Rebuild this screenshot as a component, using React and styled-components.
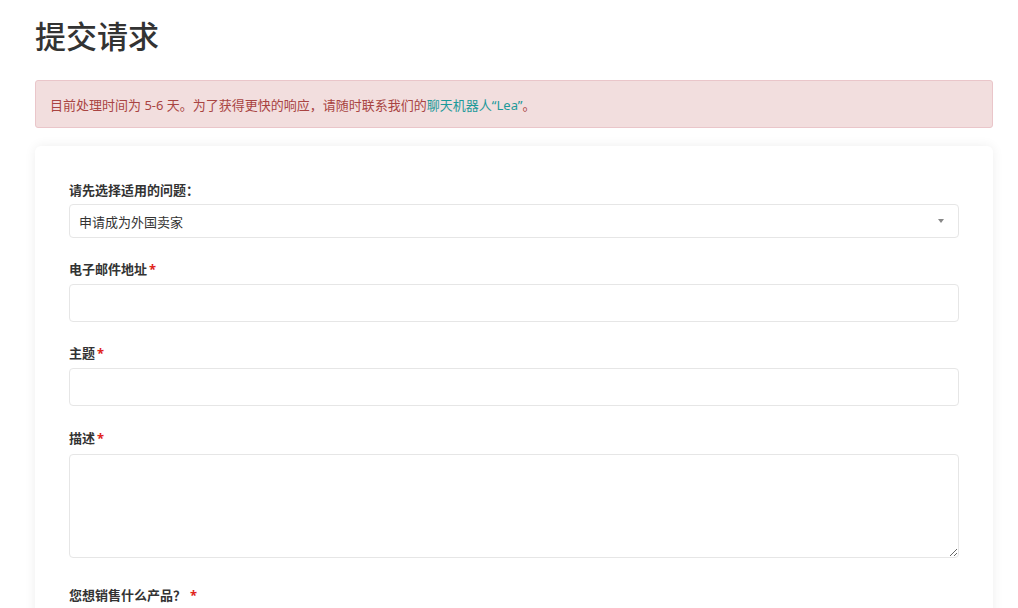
import React from "react";
import styled, { createGlobalStyle } from "styled-components";

const GlobalStyle = createGlobalStyle`
  body {
    margin: 0;
    background: #ffffff;
    font-family: "Noto Sans", "Noto Sans CJK SC", sans-serif;
    color: #333333;
  }
`;

const Page = styled.div`
  padding: 0 25px 0 35px;
  overflow: hidden;
  height: 608px;
  box-sizing: border-box;
`;

const Title = styled.h1`
  margin: 0;
  padding-top: 14px;
  font-family: "Noto Sans CJK SC", sans-serif;
  font-size: 31px;
  font-weight: 500;
  line-height: 42px;
  color: #333333;
`;

const Alert = styled.div`
  margin-top: 24px;
  height: 48px;
  box-sizing: border-box;
  display: flex;
  align-items: center;
  padding: 0 14px;
  background: #f2dede;
  border: 1px solid #eac6ca;
  border-radius: 3px;
  color: #a94442;
  font-size: 13px;
`;

const Link = styled.a`
  color: #1e9a9a;
  text-decoration: none;
`;

const Card = styled.div`
  margin-top: 18px;
  background: #ffffff;
  border-radius: 6px;
  box-shadow: 0 0 12px rgba(0, 0, 0, 0.07);
  padding: 35px 34px 40px;
`;

const Field = styled.div`
  margin-bottom: ${(p) => p.gap || 22}px;
`;

const Label = styled.label`
  display: block;
  font-size: 13px;
  font-weight: 700;
  line-height: 18px;
  margin-bottom: ${(p) => p.space || 6}px;
  color: #333333;
`;

const Req = styled.span`
  color: #e0241b;
  margin-left: ${(p) => p.space || 2}px;
`;

const Select = styled.div`
  height: 34px;
  box-sizing: border-box;
  border: 1px solid #e6e6e6;
  border-radius: 4px;
  display: flex;
  align-items: center;
  justify-content: space-between;
  padding: 0 14px 0 9px;
  font-size: 13px;
  color: #333333;
`;

const Caret = styled.span`
  width: 0;
  height: 0;
  border-left: 3px solid transparent;
  border-right: 3px solid transparent;
  border-top: 4px solid #888888;
`;

const Input = styled.input`
  display: block;
  width: 100%;
  height: ${(p) => p.h || 38}px;
  box-sizing: border-box;
  border: 1px solid #e6e6e6;
  border-radius: 4px;
  outline: none;
  font-family: inherit;
`;

const TextArea = styled.textarea`
  display: block;
  width: 100%;
  height: 104px;
  box-sizing: border-box;
  border: 1px solid #e6e6e6;
  border-radius: 4px;
  outline: none;
  resize: vertical;
  font-family: inherit;
`;

export default function App() {
  return (
    <>
      <GlobalStyle />
      <Page>
        <Title>提交请求</Title>
        <Alert>
          目前处理时间为 5-6 天。为了获得更快的响应，请随时联系我们的
          <Link href="#">聊天机器人“Lea”</Link>。
        </Alert>
        <Card>
          <Field gap={22}>
            <Label space={5}>请先选择适用的问题：</Label>
            <Select>
              <span>申请成为外国卖家</span>
              <Caret />
            </Select>
          </Field>
          <Field gap={22}>
            <Label>
              电子邮件地址<Req>*</Req>
            </Label>
            <Input />
          </Field>
          <Field gap={23}>
            <Label>
              主题<Req>*</Req>
            </Label>
            <Input />
          </Field>
          <Field gap={28}>
            <Label space={7}>
              描述<Req>*</Req>
            </Label>
            <TextArea />
          </Field>
          <Field>
            <Label>
              您想销售什么产品？<Req space={4}>*</Req>
            </Label>
          </Field>
        </Card>
      </Page>
    </>
  );
}
